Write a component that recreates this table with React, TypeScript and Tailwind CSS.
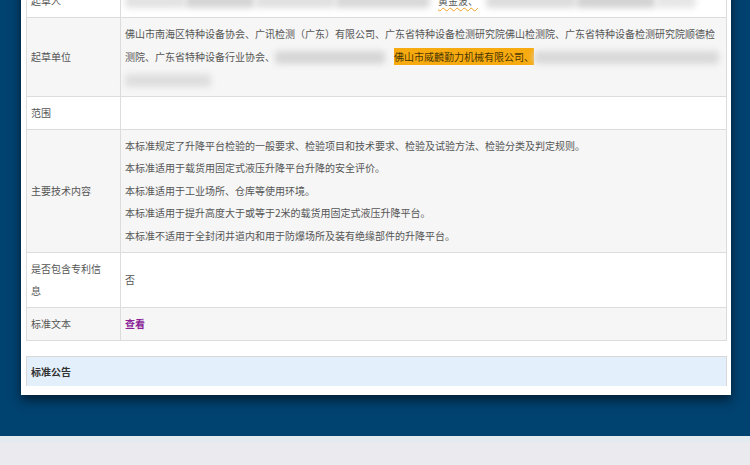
import React from 'react';

const font = { fontFamily: '"Noto Sans CJK SC", "Noto Sans", sans-serif' };

function Blur({ w, tone = 'bg-[#d6d6d6]' }: { w: number; tone?: string }) {
  return (
    <span
      className={`inline-block h-[13px] align-middle rounded-sm blur-[3px] ${tone}`}
      style={{ width: w }}
    />
  );
}

const rows: { label: React.ReactNode; bg: string; content: React.ReactNode }[] = [
  {
    label: '起草人',
    bg: 'bg-white',
    content: (
      <div className="flex items-center whitespace-nowrap">
        <Blur w={60} tone="bg-[#e2e2e2]" />
        <Blur w={70} tone="bg-[#d4d4d4]" />
        <Blur w={80} tone="bg-[#e0e0e0]" />
        <Blur w={95} tone="bg-[#d8d8d8]" />
        <span className="mx-[8px] underline decoration-wavy decoration-[#f0a020] underline-offset-2 text-[#555]">
          黄金波、
        </span>
        <Blur w={90} tone="bg-[#dcdcdc]" />
        <Blur w={80} tone="bg-[#d2d2d2]" />
        <Blur w={40} tone="bg-[#e6e6e6]" />
      </div>
    ),
  },
  {
    label: '起草单位',
    bg: 'bg-[#f6f6f6]',
    content: (
      <div className="leading-[22.5px]">
        佛山市南海区特种设备协会、广讯检测（广东）有限公司、广东省特种设备检测研究院佛山检测院、广东省特种设备检测研究院顺德检测院、广东省特种设备行业协会、
        <Blur w={110} />
        <span className="ml-[9px] bg-[#f8ab10] text-[#4a3600] py-[1px]">佛山市威麟勤力机械有限公司、</span>
        <Blur w={185} tone="bg-[#d9d9d9]" />
        <br />
        <Blur w={86} tone="bg-[#dedede]" />
      </div>
    ),
  },
  { label: '范围', bg: 'bg-white', content: null },
  {
    label: '主要技术内容',
    bg: 'bg-[#f6f6f6]',
    content: (
      <div className="leading-[22.5px]">
        <div>本标准规定了升降平台检验的一般要求、检验项目和技术要求、检验及试验方法、检验分类及判定规则。</div>
        <div>本标准适用于载货用固定式液压升降平台升降的安全评价。</div>
        <div>本标准适用于工业场所、仓库等使用环境。</div>
        <div>本标准适用于提升高度大于或等于2米的载货用固定式液压升降平台。</div>
        <div>本标准不适用于全封闭井道内和用于防爆场所及装有绝缘部件的升降平台。</div>
      </div>
    ),
  },
  { label: '是否包含专利信息', bg: 'bg-white', content: '否' },
  {
    label: '标准文本',
    bg: 'bg-[#f6f6f6]',
    content: <span className="text-[#8a1f96] font-semibold cursor-pointer">查看</span>,
  },
];

export default function App() {
  return (
    <div className="w-[750px] h-[465px] overflow-hidden text-[10px] leading-[22px] text-[#555]" style={font}>
      <div className="h-[436px] bg-[#004270] overflow-hidden">
        <div className="ml-[21px] w-[710px] -mt-[16px] bg-white pl-[5px] pr-[4px] pb-[9px] shadow-[0_5px_10px_rgba(0,0,0,0.55)]">
          <table className="w-full border-collapse border border-[#dcdcdc]">
            <colgroup>
              <col className="w-[94px]" />
              <col />
            </colgroup>
            <tbody>
              {rows.map((r, i) => (
                <tr key={i} className={r.bg}>
                  <td className="border border-[#dcdcdc] pl-[4px] pr-[12px] py-[5px] align-middle">{r.label}</td>
                  <td className="border border-[#dcdcdc] px-[4px] py-[5px] align-middle">
                    {r.content ?? <span>&nbsp;</span>}
                  </td>
                </tr>
              ))}
            </tbody>
          </table>
          <div className="mt-[15px] h-[30px] flex items-center pl-[4px] bg-[#e3f0fb] border-t border-x border-[#d8d8d8] font-bold text-[#333]">
            标准公告
          </div>
        </div>
      </div>
      <div className="h-[29px] bg-[#ebebef] border-t-[6px] border-[#e4ebf0]" />
    </div>
  );
}
